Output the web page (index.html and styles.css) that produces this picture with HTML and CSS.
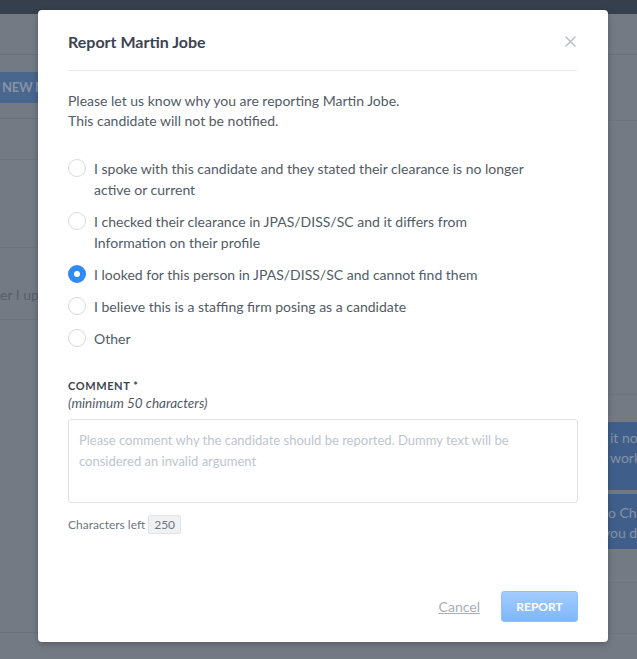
FILE: index.html
```html
<!DOCTYPE html>
<html lang="en">
<head>
  <meta charset="UTF-8">
  <title>Report Martin Jobe</title>
  <link rel="stylesheet" href="styles.css">
</head>
<body>
  <div class="page">
    <div class="topbar"></div>
    <div class="columns">
      <div class="side side-left">
        <div class="toolbar"></div>
        <div class="btn-row"><span class="new-btn">NEW MESSAGE</span></div>
        <div class="row row-short"></div>
        <div class="row row-tall"></div>
        <div class="row row-text">er I update my profile</div>
        <div class="row row-fill"></div>
      </div>
      <div class="side side-right">
        <div class="toolbar"></div>
        <div class="row row-head"></div>
        <div class="row row-gap"></div>
        <div class="note">it not<br>work</div>
        <div class="note note-2">to Ch<br>you de</div>
        <div class="row row-low"></div>
        <div class="row row-last"></div>
      </div>
    </div>
  </div>

  <div class="modal">
    <div class="modal-header">
      <h2 class="modal-title">Report Martin Jobe</h2>
      <button class="close" aria-label="Close">
        <svg width="11" height="11" viewBox="0 0 11 11"><path d="M1 1L10 10M10 1L1 10" stroke="#bcc1c8" stroke-width="1.6" stroke-linecap="round"/></svg>
      </button>
    </div>

    <div class="modal-body">
      <p class="intro">Please let us know why you are reporting Martin Jobe.<br>This candidate will not be notified.</p>

      <div class="options">
        <label class="option"><span class="radio"></span><span>I spoke with this candidate and they stated their clearance is no longer active or current</span></label>
        <label class="option"><span class="radio"></span><span>I checked their clearance in JPAS/DISS/SC and it differs from Information on their profile</span></label>
        <label class="option"><span class="radio checked"></span><span>I looked for this person in JPAS/DISS/SC and cannot find them</span></label>
        <label class="option"><span class="radio"></span><span>I believe this is a staffing firm posing as a candidate</span></label>
        <label class="option"><span class="radio"></span><span>Other</span></label>
      </div>

      <div class="comment-label">COMMENT *</div>
      <div class="comment-hint">(minimum 50 characters)</div>
      <div class="textarea">Please comment why the candidate should be reported. Dummy text will be considered an invalid argument</div>
      <div class="counter">Characters left <span class="badge">250</span></div>
    </div>

    <div class="modal-footer">
      <a class="cancel" href="#">Cancel</a>
      <button class="report">REPORT</button>
    </div>
  </div>
</body>
</html>
```

FILE: styles.css
```css
* { box-sizing: border-box; }
html, body { margin: 0; padding: 0; }
body { font-family: Lato, "Noto Sans", sans-serif; background: #737a84; height: 659px; overflow: hidden; }

/* background page, seen through the overlay */
.page { height: 659px; }
.topbar { height: 14px; background: #363f4c; }
.columns { display: flex; justify-content: space-between; }
.side { width: 100px; }
.toolbar { height: 41px; border-bottom: 1px solid #6a717b; }
.btn-row { padding-top: 17px; height: 64px; border-bottom: 1px solid #6a717b; }
.new-btn { display: block; height: 31px; line-height: 31px; background: #48668e; color: #8793a3; font-weight: bold; font-size: 13px; letter-spacing: -0.3px; padding-left: 2px; white-space: nowrap; }
.row { border-bottom: 1px solid #6d747e; }
.row-short { height: 41px; }
.row-tall { height: 88px; }
.row-text { height: 72px; color: #555e6a; font-size: 14px; white-space: nowrap; padding-top: 38px; }
.row-fill { height: 313px; border-bottom-color: #6a717b; }

.row-head { height: 66px; }
.row-gap { height: 274px; }
.note { margin-top: 27px; height: 68px; background: #3f5f8a; color: #8592a4; font-size: 14px; line-height: 20px; padding: 6px 0 0 73px; white-space: nowrap; overflow: hidden; }
.note-2 { margin-top: 4px; height: 55px; padding-top: 9px; padding-left: 66px; }
.row-low { height: 34px; }
.row-last { height: 51px; }

/* modal */
.modal { position: absolute; left: 38px; top: 10px; width: 570px; height: 632px; background: #fff; border-radius: 4px; box-shadow: 0 2px 6px rgba(0,0,0,0.25); padding: 0 30px 20px; display: flex; flex-direction: column; }
.modal-header { height: 61px; border-bottom: 1px solid #e9ebee; display: flex; align-items: center; justify-content: space-between; padding-top: 2px; }
.modal-title { margin: 0; font-size: 16px; font-weight: bold; color: #3b4450; }
.close { background: none; border: 0; padding: 0; margin-right: 2px; line-height: 0; }

.modal-body { flex: 1; color: #515b67; font-size: 14px; }
.intro { margin: 20px 0 0; line-height: 20px; }
.options { margin-top: 27px; display: flex; flex-direction: column; gap: 11px; }
.option { display: flex; gap: 8px; line-height: 21px; padding-right: 44px; }
.radio { flex: none; width: 18px; height: 18px; margin-top: 1px; border: 1px solid #d7dade; border-radius: 50%; }
.radio.checked { border: 6px solid #2f8af5; background: #fff; }

.comment-label { margin-top: 29px; font-size: 11px; font-weight: bold; letter-spacing: 0.6px; color: #3b4450; line-height: 16px; }
.comment-hint { font-size: 13.5px; font-style: italic; line-height: 19px; }
.textarea { margin-top: 6px; height: 84px; border: 1px solid #dfe1e6; border-radius: 3px; padding: 10px 10px; font-size: 13px; line-height: 21px; color: #c0c5cc; }
.counter { margin-top: 12px; font-size: 12px; color: #6d7682; display: flex; align-items: center; gap: 3px; }
.badge { display: inline-block; background: #eff1f3; border: 1px solid #e2e5e8; border-radius: 2px; padding: 1px 5px; line-height: 15px; color: #6d7682; }

.modal-footer { display: flex; justify-content: flex-end; align-items: center; gap: 21px; }
.cancel { color: #a9aeb6; font-size: 14px; text-decoration: underline; }
.report { width: 77px; height: 31px; border: 1px solid #8fc0fb; border-radius: 3px; background: linear-gradient(#a3ccff, #7fb6fb); color: #fff; font-family: inherit; font-weight: bold; font-size: 12px; }
```
